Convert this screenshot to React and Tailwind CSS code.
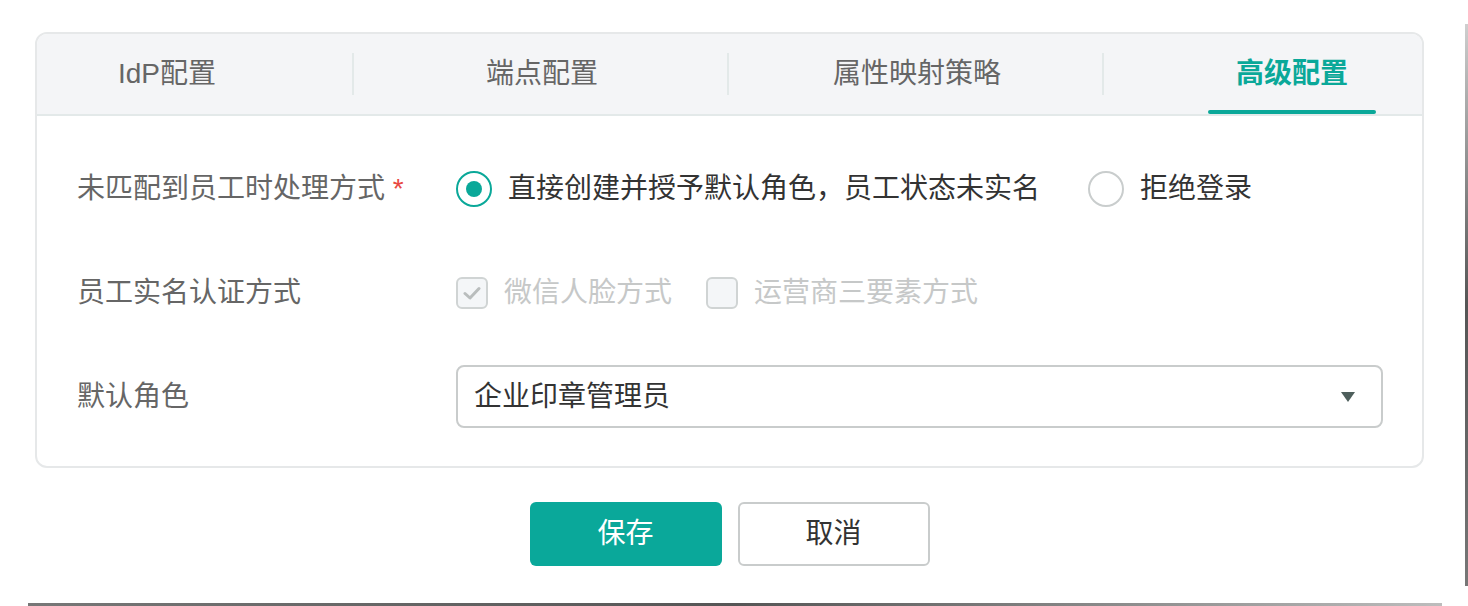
import { useState } from "react";

const font = { fontFamily: '"Liberation Sans", "Noto Sans CJK SC", sans-serif' };

const tabs = ["IdP配置", "端点配置", "属性映射策略", "高级配置"];

function Radio({ checked, label, onClick }) {
  return (
    <button className="flex items-center cursor-pointer" onClick={onClick}>
      <span
        className={
          "w-[36px] h-[36px] rounded-full border-2 flex items-center justify-center " +
          (checked ? "border-[#0aa899]" : "border-[#c9cdcd]")
        }
      >
        {checked && <span className="w-[16px] h-[16px] rounded-full bg-[#0aa899]" />}
      </span>
      <span className="ml-[16px] text-[28px] text-[#333]">{label}</span>
    </button>
  );
}

function Checkbox({ checked, label }) {
  return (
    <div className="flex items-center">
      <span className="w-[32px] h-[32px] rounded-[6px] border-2 border-[#d0d4d4] bg-[#f4f6f8] flex items-center justify-center">
        {checked && (
          <svg width="18" height="14" viewBox="0 0 18 14">
            <path d="M2 7.5 L7 12 L16 2.5" fill="none" stroke="#b9bdbd" strokeWidth="3" strokeLinecap="round" strokeLinejoin="round" />
          </svg>
        )}
      </span>
      <span className="ml-[16px] text-[28px] text-[#c6c8c8]">{label}</span>
    </div>
  );
}

export default function App() {
  const [active, setActive] = useState(3);
  const [mode, setMode] = useState(0);

  return (
    <div className="relative w-[1468px] h-[606px] overflow-hidden bg-white" style={font}>
      <div className="pt-[32px] pl-[35px]">
        <div className="w-[1389px] border-2 border-[#e6e8e9] rounded-[12px] overflow-hidden">
          <div className="h-[82px] bg-[#f4f5f7] border-b-2 border-[#e3e9e9] flex justify-center overflow-hidden">
            {tabs.map((t, i) => (
              <div key={t} className="relative shrink-0 w-[375px] h-full flex items-center justify-center">
                {i > 0 && <span className="absolute left-[-3px] top-[19px] w-[2px] h-[42px] bg-[#e3e9e9]" />}
                <button
                  className={
                    "relative h-full w-[168px] flex items-center justify-center text-[28px] cursor-pointer " +
                    (active === i ? "text-[#0aa899] font-bold" : "text-[#666]")
                  }
                  onClick={() => setActive(i)}
                >
                  {t}
                  {active === i && (
                    <span className="absolute left-0 right-0 bottom-[0px] h-[4px] rounded-full bg-[#0aa899]" />
                  )}
                </button>
              </div>
            ))}
          </div>

          <div className="pt-[41px] pb-[38px] pl-[40px] pr-[39px] flex flex-col gap-[41px]">
            <div className="flex items-center h-[63px]">
              <div className="w-[379px] text-[28px] text-[#666]">
                未匹配到员工时处理方式 <span className="text-[#e8483f]">*</span>
              </div>
              <Radio checked={mode === 0} label="直接创建并授予默认角色，员工状态未实名" onClick={() => setMode(0)} />
              <div className="ml-[48px]">
                <Radio checked={mode === 1} label="拒绝登录" onClick={() => setMode(1)} />
              </div>
            </div>

            <div className="flex items-center h-[63px]">
              <div className="w-[379px] text-[28px] text-[#666]">员工实名认证方式</div>
              <div className="flex items-center gap-[34px]">
                <Checkbox checked label="微信人脸方式" />
                <Checkbox label="运营商三要素方式" />
              </div>
            </div>

            <div className="flex items-center h-[63px]">
              <div className="w-[379px] text-[28px] text-[#666]">默认角色</div>
              <div className="flex-1 h-[63px] border-2 border-[#c9cccc] rounded-[8px] flex items-center justify-between pl-[16px] pr-[26px]">
                <span className="text-[28px] text-[#333]">企业印章管理员</span>
                <svg width="14" height="10" viewBox="0 0 14 10">
                  <path d="M0 0 H14 L7 10 Z" fill="#4e5f5c" />
                </svg>
              </div>
            </div>
          </div>
        </div>

        <div className="w-[1389px] mt-[34px] flex justify-center gap-[16px]">
          <button className="w-[192px] h-[64px] rounded-[6px] bg-[#0aa89a] text-white text-[28px] cursor-pointer">
            保存
          </button>
          <button className="w-[192px] h-[64px] rounded-[6px] border-2 border-[#c9cccc] bg-white text-[#333] text-[28px] cursor-pointer">
            取消
          </button>
        </div>
      </div>

      <span className="absolute left-[1465px] top-[24px] w-[3px] h-[562px] bg-gradient-to-b from-[#cfcfcf] via-[#555] to-[#777]" />
      <span className="absolute left-[28px] top-[603px] w-[1414px] h-[3px] bg-gradient-to-r from-[#777] via-[#555] to-[#bdbdbd]" />
    </div>
  );
}
